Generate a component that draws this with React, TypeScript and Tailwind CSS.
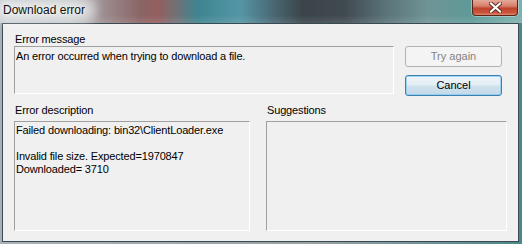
import { ReactNode } from "react";

const TextBox = ({ children, className }: { children?: ReactNode; className: string }) => {
  return (
    <div
      className={`border border-t-[#a0a0a0] border-l-[#a0a0a0] border-b-white border-r-white bg-[#f0f0f0] pl-[1px] text-[11px] leading-[13px] tracking-[-0.15px] text-black ${className}`}
    >
      {children}
    </div>
  );
};

const Label = ({ children, className = "" }: { children: ReactNode; className?: string }) => {
  return (
    <div className={`h-[13px] pl-[1px] text-[11px] leading-[13px] tracking-[-0.15px] text-black ${className}`}>
      {children}
    </div>
  );
};

export default function App() {
  return (
    <div
      className="relative flex h-[244px] w-[522px] flex-col overflow-hidden bg-[linear-gradient(90deg,#a9b1b6_0%,#9aa0a4_60%,#5f8d8f_90%,#4c8887_100%)]"
      style={{ fontFamily: '"Liberation Sans", Arial, sans-serif' }}
    >
      {/* title bar */}
      <div className="relative h-[23px] shrink-0 bg-[linear-gradient(90deg,#c3c8cc_0%,#b9bdc0_14%,#9c8c8e_20%,#8a6464_27%,#955e5e_30%,#6e7277_34%,#3d8590_38%,#5596a6_46%,#4a6a76_52%,#3b4449_58%,#404a50_66%,#5a7479_74%,#6f9495_82%,#5e9a98_90%,#7fb2ae_100%)]">
        <div className="absolute inset-x-0 bottom-0 h-[8px] bg-gradient-to-b from-transparent to-white/10" />
        <div className="absolute left-[-4px] top-[-2px] h-[24px] w-[100px] rounded-[10px] bg-white/50 blur-[5px]" />
        <span className="absolute left-[3px] top-[3px] text-[12px] leading-[15px] text-[#101010] [text-shadow:0_0_4px_#fff,0_0_8px_#fff]">
          Download error
        </span>
        <div className="absolute left-[472px] top-0 flex h-[16px] w-[46px] items-center justify-center rounded-b-[4px] border border-t-0 border-[#5a241c] bg-[linear-gradient(180deg,#e7a99a_0%,#d6806b_40%,#c0442d_55%,#c9563d_85%,#e08a6c_100%)] shadow-[0_0_0_1px_rgba(255,255,255,0.35)]">
          <svg width="13" height="11" viewBox="0 0 13 11">
            <path
              d="M2 1.5 L11 9.5 M11 1.5 L2 9.5"
              stroke="#5a2a22"
              strokeWidth="4"
              strokeLinecap="square"
              fill="none"
            />
            <path
              d="M2 1.5 L11 9.5 M11 1.5 L2 9.5"
              stroke="#ffffff"
              strokeWidth="2.2"
              strokeLinecap="square"
              fill="none"
            />
          </svg>
        </div>
      </div>

      {/* client area */}
      <div className="ml-[2px] h-[219px] w-[517px] border border-[#3a4a52] bg-[#f0f0f0] pl-[11px]">
        <div className="mt-[9px] flex">
          <div className="w-[380px]">
            <Label>Error message</Label>
            <TextBox className="h-[48px] pt-[3px]">An error occurred when trying to download a file.</TextBox>
          </div>
          <div className="ml-[11px] mt-[13px] flex w-[97px] flex-col gap-[8px]">
            <button className="h-[21px] rounded-[3px] border border-[#adb2b5] bg-[#f4f4f4] text-[11px] leading-[13px] text-[#838383]">
              Try again
            </button>
            <button className="h-[21px] rounded-[3px] border border-[#3c7fb1] bg-[linear-gradient(180deg,#eef5f9_0%,#e2edf4_48%,#cfe1ed_52%,#c3d9e9_100%)] text-[11px] leading-[13px] text-black shadow-[inset_0_0_0_1px_rgba(130,200,240,0.7)]">
              Cancel
            </button>
          </div>
        </div>

        <div className="mt-[8px] flex">
          <div className="w-[236px]">
            <Label className="mb-[4px]">Error description</Label>
            <TextBox className="h-[110px] pt-[2px]">
              <div>Failed downloading: bin32\ClientLoader.exe</div>
              <div className="h-[13px]" />
              <div>Invalid file size. Expected=1970847</div>
              <div>Downloaded= 3710</div>
            </TextBox>
          </div>
          <div className="ml-[16px] w-[241px]">
            <Label className="mb-[4px]">Suggestions</Label>
            <TextBox className="h-[110px]" />
          </div>
        </div>
      </div>
    </div>
  );
}
